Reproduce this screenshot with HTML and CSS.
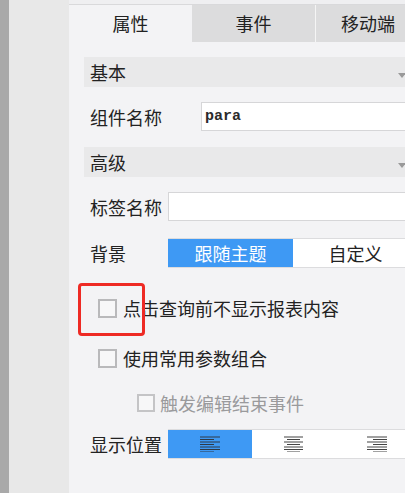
FILE: index.html
```html
<!DOCTYPE html>
<html lang="zh">
<head>
<meta charset="utf-8">
<link rel="stylesheet" href="styles.css">
</head>
<body>
<div class="app">
  <div class="edge"></div>
  <div class="side"></div>
  <div class="panel">
    <div class="topbar"></div>
    <div class="tabs">
      <div class="tab active">属性</div>
      <div class="tab">事件</div>
      <div class="tab sep">移动端</div>
    </div>
    <div class="content">
      <div class="sec s1"><span>基本</span><span class="caret"></span></div>
      <div class="row r-name">
        <span class="label w-name">组件名称</span>
        <div class="input mono">para</div>
      </div>
      <div class="sec s2"><span>高级</span><span class="caret"></span></div>
      <div class="row r-tag">
        <span class="label w-tag">标签名称</span>
        <div class="input"></div>
      </div>
      <div class="row r-bg">
        <span class="label w-tag">背景</span>
        <div class="seg">
          <div class="opt on wide">跟随主题</div>
          <div class="opt wide">自定义</div>
        </div>
      </div>
      <div class="check c1">
        <span class="box"></span><span class="ctext">点击查询前不显示报表内容</span>
        <span class="mark"></span>
      </div>
      <div class="check c2">
        <span class="box"></span><span class="ctext">使用常用参数组合</span>
      </div>
      <div class="check c3 disabled">
        <span class="box"></span><span class="ctext">触发编辑结束事件</span>
      </div>
      <div class="row r-pos">
        <span class="label w-tag">显示位置</span>
        <div class="seg">
          <div class="opt on narrow">
            <svg width="21" height="16" viewBox="0 0 21 16"><g stroke="#2f3a48" stroke-width="1.2"><path d="M0 1h20M0 3.5h14M0 6h20M0 8.5h14M0 11h20M0 13.5h20M0 16h14"/></g></svg>
          </div>
          <div class="opt narrow">
            <svg width="21" height="16" viewBox="0 0 21 16"><g stroke="#444" stroke-width="1.2"><path d="M1 1h19M4 3.5h13M1 6h19M4 8.5h13M1 11h19M1 13.5h19M4 16h13"/></g></svg>
          </div>
          <div class="opt narrow">
            <svg width="21" height="16" viewBox="0 0 21 16"><g stroke="#444" stroke-width="1.2"><path d="M1 1h20M7 3.5h14M1 6h20M7 8.5h14M1 11h20M1 13.5h20M7 16h14"/></g></svg>
          </div>
        </div>
      </div>
    </div>
  </div>
</div>
</body>
</html>
```

FILE: styles.css
```css
html, body {
  margin: 0;
  padding: 0;
  width: 405px;
  height: 493px;
  overflow: hidden;
  background: #f3f3f5;
}
.app {
  display: flex;
  width: 420px;
  height: 493px;
  font-family: "Noto Sans CJK SC", "Noto Sans", sans-serif;
  font-size: 18px;
  color: #222;
}
.edge {
  width: 9px;
  background: #a9a9a9;
}
.side {
  width: 60px;
  background: #e8e8e8;
}
.panel {
  flex: 1;
  background: #f3f3f5;
  display: flex;
  flex-direction: column;
}
.topbar {
  height: 4px;
  background: #efeff1;
  border-bottom: 1px solid #d9d9db;
}
.tabs {
  display: flex;
  height: 37px;
}
.tab {
  width: 123px;
  display: flex;
  align-items: center;
  justify-content: center;
  background: #dcdcdd;
  line-height: 1;
  padding-bottom: 2px;
  box-sizing: border-box;
}
.tab.active {
  background: #f3f3f5;
}
.tab.sep {
  border-left: 1px solid #f5f5f5;
  flex: 1;
  width: auto;
}
.content {
  padding-left: 15px;
  display: flex;
  flex-direction: column;
}
.sec {
  height: 30px;
  background: #e9e9ea;
  display: flex;
  align-items: center;
  justify-content: space-between;
  padding: 0 14px 0 6px;
  line-height: 1;
  color: #222;
}
.s1 { margin-top: 15px; }
.s2 { margin-top: 16px; }
.caret {
  width: 0;
  height: 0;
  border-left: 4px solid transparent;
  border-right: 4px solid transparent;
  border-top: 5px solid #9a9a9a;
  margin-top: 6px;
}
.row {
  display: flex;
  align-items: center;
}
.label {
  padding-left: 6px;
  box-sizing: border-box;
  line-height: 1;
  flex: none;
}
.w-name { width: 117px; }
.w-tag { width: 84px; }
.r-name { margin-top: 15px; height: 29px; }
.r-tag { margin-top: 15px; height: 29px; }
.r-bg { margin-top: 17px; height: 30px; }
.r-pos { margin-top: 11px; height: 30px; }
.input {
  flex: 1;
  height: 29px;
  box-sizing: border-box;
  background: #fff;
  border: 1px solid #d6d6d8;
  display: flex;
  align-items: center;
  padding-left: 3px;
}
.mono {
  font-family: "Liberation Mono", "DejaVu Sans Mono", monospace;
  font-size: 15px;
  font-weight: bold;
  color: #2a2a2a;
}
.seg {
  display: flex;
  height: 30px;
  box-sizing: border-box;
  border-top: 1px solid #dcdcde;
  border-bottom: 1px solid #dcdcde;
  background: #fff;
}
.opt {
  display: flex;
  align-items: center;
  justify-content: center;
  line-height: 1;
  color: #222;
  background: #fff;
}
.opt.on {
  background: #3e99f4;
  color: #fff;
}
.wide { width: 125px; }
.narrow { width: 84px; }
.narrow + .narrow { width: 83px; }
.check {
  position: relative;
  display: flex;
  align-items: center;
  height: 30px;
  line-height: 1;
}
.c1 { margin-top: 25px; padding-left: 14px; }
.c2 { margin-top: 20px; padding-left: 14px; }
.c3 { margin-top: 15px; padding-left: 53px; }
.box {
  width: 19px;
  height: 19px;
  box-sizing: border-box;
  border: 2px solid #b9b9bb;
  background: #f7f7f8;
  margin-right: 6px;
  flex: none;
}
.c3 .box {
  width: 18px;
  height: 18px;
  border-color: #c4c4c6;
  margin-right: 5px;
}
.disabled .ctext {
  color: #9a9a9c;
}
.mark {
  position: absolute;
  left: -6px;
  top: -10px;
  width: 67px;
  height: 53px;
  box-sizing: border-box;
  border: 3px solid #ee2a24;
  border-radius: 4px;
}
```
